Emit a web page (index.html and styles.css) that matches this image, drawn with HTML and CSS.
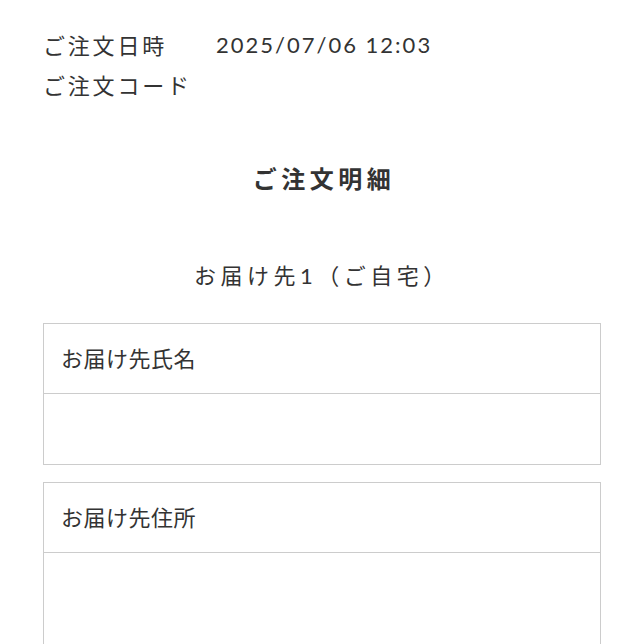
FILE: index.html
```html
<!DOCTYPE html>
<html lang="ja">
<head>
<meta charset="utf-8">
<link rel="stylesheet" href="styles.css">
</head>
<body>
<div class="page">
  <dl class="meta">
    <div class="meta-row"><dt>ご注文日時</dt><dd>2025/07/06 12:03</dd></div>
    <div class="meta-row"><dt>ご注文コード</dt><dd></dd></div>
  </dl>
  <h2 class="title">ご注文明細</h2>
  <h3 class="subtitle">お届け先1（ご自宅）</h3>
  <section class="box">
    <div class="box-head">お届け先氏名</div>
    <div class="box-body"></div>
  </section>
  <section class="box">
    <div class="box-head">お届け先住所</div>
    <div class="box-body tall"></div>
  </section>
</div>
</body>
</html>
```
FILE: styles.css
```css
html, body {
  margin: 0;
  background: #fff;
}
body {
  font-family: "Lato", "Noto Sans CJK JP", sans-serif;
  color: #333;
}
.page {
  padding: 24px 43px 0;
}
.meta {
  margin: 0;
}
.meta-row {
  display: flex;
  height: 40px;
  align-items: center;
  font-size: 22px;
}
.meta-row dt {
  width: 173px;
  flex: none;
  letter-spacing: 2.8px;
}
.meta-row dd {
  margin: 0;
  letter-spacing: 2px;
}
.title {
  margin: 58px 0 0;
  height: 34px;
  line-height: 34px;
  text-align: center;
  font-size: 24px;
  font-weight: 700;
  letter-spacing: 4.5px;
  padding-left: 4px;
}
.subtitle {
  margin: 65px 0 0;
  height: 30px;
  line-height: 30px;
  text-align: center;
  font-size: 22px;
  font-weight: 400;
  letter-spacing: 4.5px;
}
.subtitle + .box {
  margin-top: 32px;
}
.box {
  border: 1px solid #ccc;
  margin-bottom: 17px;
}
.box-head {
  height: 66px;
  padding: 0 0 3px 17px;
  border-bottom: 1px solid #ccc;
  display: flex;
  align-items: center;
  font-size: 22px;
  letter-spacing: 0.5px;
}
.box-body {
  height: 70px;
}
.box-body.tall {
  height: 120px;
}
```
